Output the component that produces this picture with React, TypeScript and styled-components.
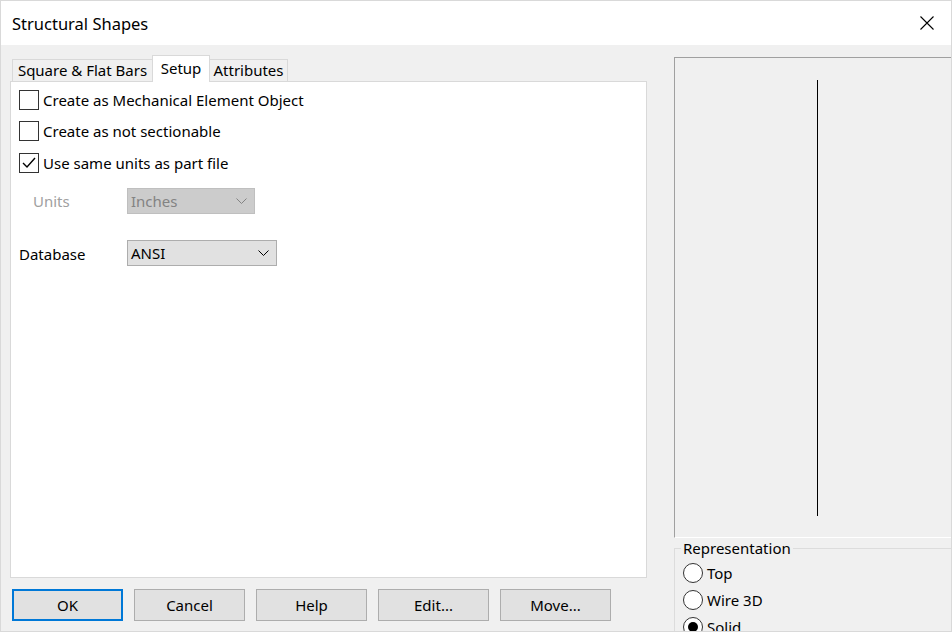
import React from "react";
import styled, { createGlobalStyle } from "styled-components";

const GlobalStyle = createGlobalStyle`
    body {
        margin: 0;
        font-family: "Noto Sans", "Open Sans", sans-serif;
        color: #000;
    }
`;

const Window = styled.div`
    width: 952px;
    height: 632px;
    box-sizing: border-box;
    border: 1px solid #d9d9d9;
    background: #f0f0f0;
    display: flex;
    flex-direction: column;
    overflow: hidden;
    font-size: 15px;
`;

const TitleBar = styled.div`
    height: 44px;
    flex: none;
    background: #fff;
    display: flex;
    align-items: center;
    justify-content: space-between;
    padding: 0 17px 0 11px;
    font-size: 16.5px;
`;

const Body = styled.div`
    flex: 1;
    min-height: 0;
    display: flex;
    padding-left: 9px;
`;

const LeftColumn = styled.div`
    width: 637px;
    display: flex;
    flex-direction: column;
    padding-top: 10px;
`;

const TabStrip = styled.div`
    display: flex;
    align-items: flex-end;
    height: 27px;
    padding-left: 2px;
    margin-bottom: -1px;
    position: relative;
    z-index: 1;
`;

const Tab = styled.div<{ $active?: boolean; $w: number }>`
    box-sizing: border-box;
    width: ${(p) => p.$w}px;
    height: ${(p) => (p.$active ? 27 : 23)}px;
    margin-left: -1px;
    border: 1px solid #d9d9d9;
    border-bottom: ${(p) => (p.$active ? "none" : "1px solid #d9d9d9")};
    background: ${(p) => (p.$active ? "#fff" : "#f0f0f0")};
    display: flex;
    align-items: ${(p) => (p.$active ? "flex-start" : "center")};
    justify-content: center;
    line-height: ${(p) => (p.$active ? "24px" : "20px")};
    padding-bottom: ${(p) => (p.$active ? 0 : 2)}px;
    &:first-child {
        margin-left: 0;
    }
`;

const Panel = styled.div`
    height: 497px;
    box-sizing: border-box;
    border: 1px solid #d9d9d9;
    background: #fff;
    padding: 2px 8px;
`;

const CheckRow = styled.label`
    display: flex;
    align-items: center;
    gap: 4px;
    height: 31.5px;
`;

const Box = styled.span`
    width: 20px;
    height: 20px;
    box-sizing: border-box;
    border: 1px solid #333;
    background: #fff;
    display: flex;
    align-items: center;
    justify-content: center;
`;

const FieldRow = styled.div<{ $top: number; $indent?: number }>`
    display: flex;
    align-items: center;
    margin-top: ${(p) => p.$top}px;
    height: 26px;
    padding-left: ${(p) => p.$indent ?? 0}px;
`;

const FieldLabel = styled.span<{ $disabled?: boolean; $w: number }>`
    width: ${(p) => p.$w}px;
    color: ${(p) => (p.$disabled ? "#a0a0a0" : "#000")};
    padding-top: ${(p) => (p.$disabled ? 0 : 3)}px;
`;

const Combo = styled.div<{ $disabled?: boolean; $w: number }>`
    box-sizing: border-box;
    width: ${(p) => p.$w}px;
    height: 26px;
    border: 1px solid ${(p) => (p.$disabled ? "#bfbfbf" : "#adadad")};
    background: ${(p) => (p.$disabled ? "#cccccc" : "#e1e1e1")};
    color: ${(p) => (p.$disabled ? "#838383" : "#000")};
    display: flex;
    align-items: center;
    justify-content: space-between;
    padding: 0 7px 0 3px;
`;

const ButtonRow = styled.div`
    display: flex;
    gap: 11px;
    margin-top: 11px;
    padding-left: 2px;
`;

const Button = styled.button<{ $default?: boolean }>`
    width: 111px;
    height: 32px;
    box-sizing: border-box;
    background: #e1e1e1;
    border: ${(p) => (p.$default ? "2px solid #0078d7" : "1px solid #adadad")};
    font-family: inherit;
    font-size: 15px;
    color: #000;
    padding: 0 0 1px;
`;

const RightColumn = styled.div`
    flex: 1;
    margin-left: 27px;
    padding-top: 12px;
    display: flex;
    flex-direction: column;
`;

const Preview = styled.div`
    height: 481px;
    box-sizing: border-box;
    border-top: 1px solid #a0a0a0;
    border-left: 1px solid #a0a0a0;
    border-bottom: 1px solid #fff;
    flex: none;
`;

const Group = styled.fieldset`
    margin: 0;
    padding: 1px 0 0 8px;
    border: none;
    border-top: 1px solid #dcdcdc;
    border-left: 1px solid #dcdcdc;
    legend {
        padding: 0 2px;
        margin-left: -2px;
        line-height: 20px;
    }
`;

const RadioRow = styled.label`
    display: flex;
    align-items: center;
    gap: 4px;
    height: 27px;
`;

const Radio = styled.span<{ $checked?: boolean }>`
    width: 20px;
    height: 20px;
    box-sizing: border-box;
    border: 1px solid #333;
    border-radius: 50%;
    background: #fff;
    display: flex;
    align-items: center;
    justify-content: center;
    &::after {
        content: "";
        width: 10px;
        height: 10px;
        border-radius: 50%;
        background: ${(p) => (p.$checked ? "#000" : "transparent")};
    }
`;

const Chevron = () => (
    <svg width="11" height="6" viewBox="0 0 11 6">
        <polyline points="0.5,0.5 5.5,5.5 10.5,0.5" fill="none" stroke="currentColor" strokeWidth="1" />
    </svg>
);

const Check = ({ on }: { on?: boolean }) => (
    <Box>
        {on && (
            <svg width="14" height="12" viewBox="0 0 14 12">
                <polyline points="1,6 5,10 13,1" fill="none" stroke="#000" strokeWidth="1.4" />
            </svg>
        )}
    </Box>
);

export default function App() {
    return (
        <Window>
            <GlobalStyle />
            <TitleBar>
                <span>Structural Shapes</span>
                <svg width="14" height="14" viewBox="0 0 14 14">
                    <path d="M0.5 0.5 L13.5 13.5 M13.5 0.5 L0.5 13.5" stroke="#000" strokeWidth="1.1" />
                </svg>
            </TitleBar>
            <Body>
                <LeftColumn>
                    <TabStrip>
                        <Tab $w={141}>Square &amp; Flat Bars</Tab>
                        <Tab $w={58} $active>Setup</Tab>
                        <Tab $w={79}>Attributes</Tab>
                    </TabStrip>
                    <Panel>
                        <CheckRow>
                            <Check />
                            Create as Mechanical Element Object
                        </CheckRow>
                        <CheckRow>
                            <Check />
                            Create as not sectionable
                        </CheckRow>
                        <CheckRow>
                            <Check on />
                            Use same units as part file
                        </CheckRow>
                        <FieldRow $top={9} $indent={14}>
                            <FieldLabel $w={94} $disabled>Units</FieldLabel>
                            <Combo $w={128} $disabled>
                                Inches
                                <Chevron />
                            </Combo>
                        </FieldRow>
                        <FieldRow $top={26}>
                            <FieldLabel $w={108}>Database</FieldLabel>
                            <Combo $w={150}>
                                ANSI
                                <Chevron />
                            </Combo>
                        </FieldRow>
                    </Panel>
                    <ButtonRow>
                        <Button $default>OK</Button>
                        <Button>Cancel</Button>
                        <Button>Help</Button>
                        <Button>Edit...</Button>
                        <Button>Move...</Button>
                    </ButtonRow>
                </LeftColumn>
                <RightColumn>
                    <Preview>
                        <svg width="100%" height="100%">
                            <line x1="142.5" y1="22" x2="142.5" y2="458" stroke="#000" strokeWidth="1" />
                        </svg>
                    </Preview>
                    <Group>
                        <legend>Representation</legend>
                        <RadioRow>
                            <Radio />
                            Top
                        </RadioRow>
                        <RadioRow>
                            <Radio />
                            Wire 3D
                        </RadioRow>
                        <RadioRow>
                            <Radio $checked />
                            Solid
                        </RadioRow>
                    </Group>
                </RightColumn>
            </Body>
        </Window>
    );
}
